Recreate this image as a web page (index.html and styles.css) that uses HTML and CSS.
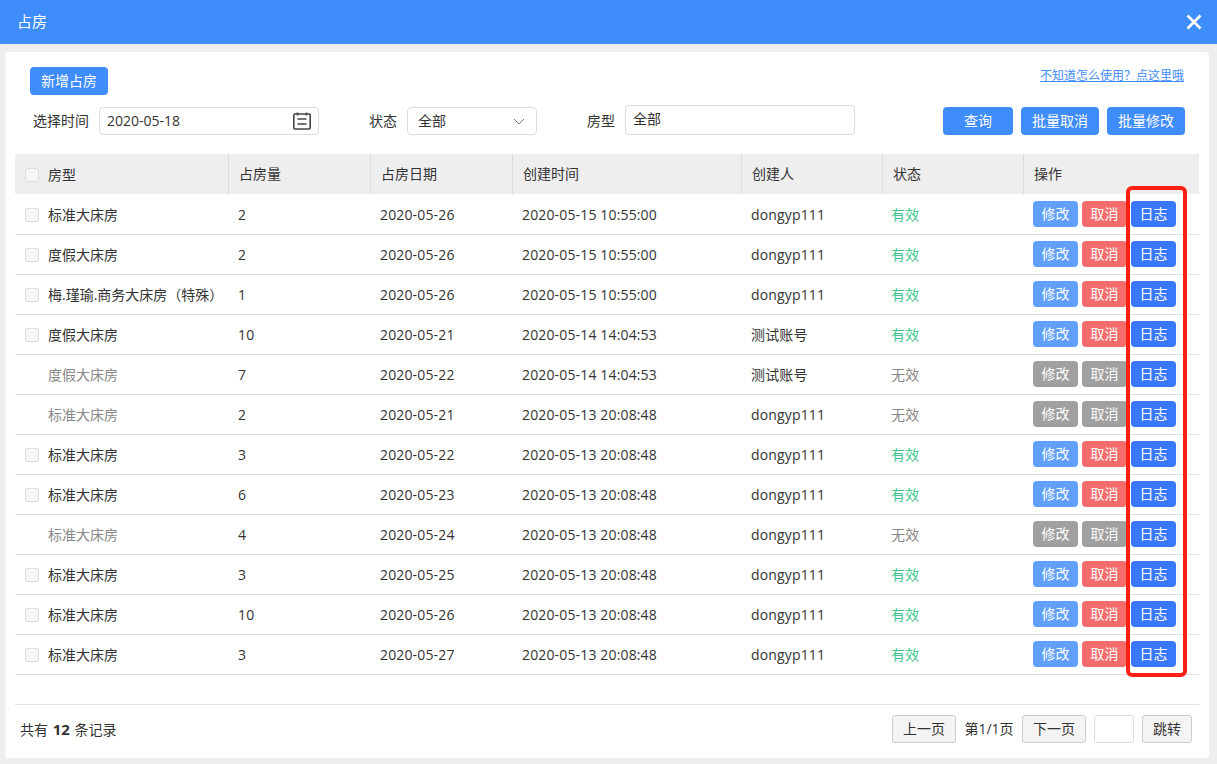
FILE: index.html
```html
<!DOCTYPE html>
<html lang="zh-CN">
<head>
<meta charset="utf-8">
<title>占房</title>
<link rel="stylesheet" href="styles.css">
</head>
<body>
<header class="titlebar">
  <span class="title">占房</span>
  <svg class="close" width="16" height="16" viewBox="0 0 16 16"><path d="M1.5 1.5l13 13M14.5 1.5l-13 13" stroke="#fff" stroke-width="2.6" fill="none"/></svg>
</header>
<main class="card">
  <div class="top-row">
    <button class="btn add">新增占房</button>
    <a class="help">不知道怎么使用？点这里哦</a>
  </div>
  <div class="filters">
    <label class="lbl l-time">选择时间</label>
    <div class="field f-date"><span>2020-05-18</span>
      <svg width="20" height="18" viewBox="0 0 20 18"><path d="M3 2h14a1.2 1.2 0 0 1 1.2 1.2v12.6A1.2 1.2 0 0 1 17 17H3a1.2 1.2 0 0 1-1.2-1.2V3.2A1.2 1.2 0 0 1 3 2zM5.5 .5v3M14.5 .5v3M5.5 7h9M5.5 12h9" stroke="#444" stroke-width="1.6" fill="none"/></svg>
    </div>
    <label class="lbl l-state">状态</label>
    <div class="field f-state"><span>全部</span>
      <svg width="12" height="7" viewBox="0 0 12 7"><path d="M1 1l5 5 5-5" stroke="#777" stroke-width="1" fill="none"/></svg>
    </div>
    <label class="lbl l-type">房型</label>
    <div class="field f-type"><span>全部</span></div>
    <div class="actions">
      <button class="btn query">查询</button>
      <button class="btn batch">批量取消</button>
      <button class="btn batch">批量修改</button>
    </div>
  </div>
  <div class="table">
    <div class="row head">
      <div class="cell c1"><i class="check"></i>房型</div><div class="cell c2">占房量</div><div class="cell c3">占房日期</div><div class="cell c4">创建时间</div><div class="cell c5">创建人</div><div class="cell c6">状态</div><div class="cell c7">操作</div>
    </div>
    <div class="row"><div class="cell c1"><i class="check"></i>标准大床房</div><div class="cell c2">2</div><div class="cell c3">2020-05-26</div><div class="cell c4">2020-05-15 10:55:00</div><div class="cell c5">dongyp111</div><div class="cell c6 ok">有效</div><div class="cell c7"><b class="op edit">修改</b><b class="op cancel">取消</b><b class="op log">日志</b></div></div>
    <div class="row"><div class="cell c1"><i class="check"></i>度假大床房</div><div class="cell c2">2</div><div class="cell c3">2020-05-26</div><div class="cell c4">2020-05-15 10:55:00</div><div class="cell c5">dongyp111</div><div class="cell c6 ok">有效</div><div class="cell c7"><b class="op edit">修改</b><b class="op cancel">取消</b><b class="op log">日志</b></div></div>
    <div class="row"><div class="cell c1"><i class="check"></i>梅.瑾瑜.商务大床房（特殊）</div><div class="cell c2">1</div><div class="cell c3">2020-05-26</div><div class="cell c4">2020-05-15 10:55:00</div><div class="cell c5">dongyp111</div><div class="cell c6 ok">有效</div><div class="cell c7"><b class="op edit">修改</b><b class="op cancel">取消</b><b class="op log">日志</b></div></div>
    <div class="row"><div class="cell c1"><i class="check"></i>度假大床房</div><div class="cell c2">10</div><div class="cell c3">2020-05-21</div><div class="cell c4">2020-05-14 14:04:53</div><div class="cell c5">测试账号</div><div class="cell c6 ok">有效</div><div class="cell c7"><b class="op edit">修改</b><b class="op cancel">取消</b><b class="op log">日志</b></div></div>
    <div class="row off"><div class="cell c1 nocheck">度假大床房</div><div class="cell c2">7</div><div class="cell c3">2020-05-22</div><div class="cell c4">2020-05-14 14:04:53</div><div class="cell c5">测试账号</div><div class="cell c6 no">无效</div><div class="cell c7"><b class="op gray">修改</b><b class="op gray">取消</b><b class="op log">日志</b></div></div>
    <div class="row off"><div class="cell c1 nocheck">标准大床房</div><div class="cell c2">2</div><div class="cell c3">2020-05-21</div><div class="cell c4">2020-05-13 20:08:48</div><div class="cell c5">dongyp111</div><div class="cell c6 no">无效</div><div class="cell c7"><b class="op gray">修改</b><b class="op gray">取消</b><b class="op log">日志</b></div></div>
    <div class="row"><div class="cell c1"><i class="check"></i>标准大床房</div><div class="cell c2">3</div><div class="cell c3">2020-05-22</div><div class="cell c4">2020-05-13 20:08:48</div><div class="cell c5">dongyp111</div><div class="cell c6 ok">有效</div><div class="cell c7"><b class="op edit">修改</b><b class="op cancel">取消</b><b class="op log">日志</b></div></div>
    <div class="row"><div class="cell c1"><i class="check"></i>标准大床房</div><div class="cell c2">6</div><div class="cell c3">2020-05-23</div><div class="cell c4">2020-05-13 20:08:48</div><div class="cell c5">dongyp111</div><div class="cell c6 ok">有效</div><div class="cell c7"><b class="op edit">修改</b><b class="op cancel">取消</b><b class="op log">日志</b></div></div>
    <div class="row off"><div class="cell c1 nocheck">标准大床房</div><div class="cell c2">4</div><div class="cell c3">2020-05-24</div><div class="cell c4">2020-05-13 20:08:48</div><div class="cell c5">dongyp111</div><div class="cell c6 no">无效</div><div class="cell c7"><b class="op gray">修改</b><b class="op gray">取消</b><b class="op log">日志</b></div></div>
    <div class="row"><div class="cell c1"><i class="check"></i>标准大床房</div><div class="cell c2">3</div><div class="cell c3">2020-05-25</div><div class="cell c4">2020-05-13 20:08:48</div><div class="cell c5">dongyp111</div><div class="cell c6 ok">有效</div><div class="cell c7"><b class="op edit">修改</b><b class="op cancel">取消</b><b class="op log">日志</b></div></div>
    <div class="row"><div class="cell c1"><i class="check"></i>标准大床房</div><div class="cell c2">10</div><div class="cell c3">2020-05-26</div><div class="cell c4">2020-05-13 20:08:48</div><div class="cell c5">dongyp111</div><div class="cell c6 ok">有效</div><div class="cell c7"><b class="op edit">修改</b><b class="op cancel">取消</b><b class="op log">日志</b></div></div>
    <div class="row"><div class="cell c1"><i class="check"></i>标准大床房</div><div class="cell c2">3</div><div class="cell c3">2020-05-27</div><div class="cell c4">2020-05-13 20:08:48</div><div class="cell c5">dongyp111</div><div class="cell c6 ok">有效</div><div class="cell c7"><b class="op edit">修改</b><b class="op cancel">取消</b><b class="op log">日志</b></div></div>
  </div>
  <footer class="pager">
    <div class="total">共有 <strong>12</strong> 条记录</div>
    <div class="pages">
      <button class="pbtn w-page">上一页</button>
      <span class="pinfo">第1/1页</span>
      <button class="pbtn w-page">下一页</button>
      <input class="pinput" type="text">
      <button class="pbtn w-jump">跳转</button>
    </div>
  </footer>
</main>
<div class="annot"></div>
</body>
</html>
```
FILE: styles.css
```css
* { box-sizing: border-box; }
html, body { margin: 0; height: 100%; }
body {
  width: 1217px; height: 764px; overflow: hidden; position: relative;
  background: #eeeeee; color: #333;
  font: 14px/20px "Open Sans", "Noto Sans CJK SC", sans-serif;
}
.titlebar {
  height: 44px; background: #3f8cfb; color: #fff;
  display: flex; align-items: center; justify-content: space-between;
  padding: 0 15px 2px 17px; font-size: 15px;
}
.close { position: relative; top: 1px; }
.card {
  width: 1204px; height: 706px; margin: 8px 0 0 5px;
  background: #fff; border-radius: 4px; padding: 15px 10px 0;
}
.top-row {
  display: flex; justify-content: space-between; align-items: flex-start;
  padding: 0 15px; height: 40px;
}
.btn {
  border: 0; border-radius: 4px; background: #3f8cfb; color: #fff;
  font: inherit; padding: 0; height: 28px;
}
.add { width: 78px; }
.help { font-size: 12px; line-height: 16px; color: #3f8cfb; text-decoration: underline; position: relative; top: 1px; }
.filters { display: flex; align-items: center; height: 28px; margin-bottom: 19px; padding-left: 18px; }
.l-time { width: 66px; }
.field {
  height: 28px; border: 1px solid #ddd; border-radius: 4px;
  display: flex; align-items: center; justify-content: space-between;
  color: #333;
}
.f-date { width: 220px; padding: 0 0 0 7px; }
.f-date svg { margin-right: 6px; }
.l-state { margin-left: 50px; width: 38px; }
.f-state { width: 130px; padding: 0 11px 0 10px; }
.l-type { margin-left: 50px; width: 38px; }
.f-type { width: 230px; padding: 3px 7px 0; height: 30px; align-items: flex-start; position: relative; top: -1px; }
.actions { display: flex; gap: 8px; margin-left: 88px; }
.query { width: 70px; }
.batch { width: 78px; }
.row { display: flex; height: 40px; border-bottom: 1px solid #e0e0e0; color: #333; }
.row.head { background: #eeeeee; border-bottom: 0; margin-bottom: 1px; }
.cell { display: flex; align-items: center; padding-left: 10px; white-space: nowrap; letter-spacing: .15px; }
.head .cell { border-left: 1px solid #dcdcdc; padding-left: 10px; letter-spacing: 0; }
.head .cell.c1 { border-left: 0; padding-top: 2px; }
.c1 { width: 213px; letter-spacing: 0; }
.c2 { width: 142px; }
.c3 { width: 142px; }
.c4 { width: 229px; }
.c5 { width: 141px; }
.c6 { width: 141px; }
.row .c6.ok, .row .c6.no { padding-left: 9px; }
.c7 { width: 176px; }
.row:not(.head) .c7 { padding-bottom: 1px; }
.check {
  width: 14px; height: 14px; border: 1px solid #ddd; border-radius: 2px;
  background: #f5f5f5; margin-right: 9px; flex: none;
}
.nocheck { padding-left: 33px; }
.off .c1, .off .c6 { color: #888; }
.ok { color: #3fc78f; }
.no { color: #888; }
.op {
  width: 45px; height: 26px; border-radius: 4px; color: #fff; font-weight: 400;
  display: flex; align-items: center; justify-content: center;
  margin-right: 4px; flex: none; letter-spacing: 0;
}
.edit { background: #619ffc; }
.cancel { background: #f56c6c; }
.gray { background: #a0a0a0; }
.log { background: #3a78fb; }
.pager {
  margin-top: 29px; height: 50px; border-top: 1px solid #e0e0e0;
  display: flex; justify-content: space-between; align-items: center;
  padding: 0 7px 1px 5px;
}
.total strong { font-size: 15px; margin: 0 1px; }
.pages { display: flex; align-items: center; }
.pbtn {
  height: 28px; border: 1px solid #ccc; border-radius: 3px; background: #f4f4f4;
  font: inherit; color: #333; padding: 0;
}
.w-page { width: 64px; }
.w-jump { width: 50px; }
.pinfo { width: 66px; text-align: center; }
.pinput { width: 40px; height: 28px; border: 1px solid #ddd; border-radius: 3px; margin: 0 8px; background: #fff; }
.annot {
  position: absolute; left: 1126px; top: 186px; width: 61px; height: 491px;
  border: 4px solid #ff2014; border-radius: 6px;
}
```
